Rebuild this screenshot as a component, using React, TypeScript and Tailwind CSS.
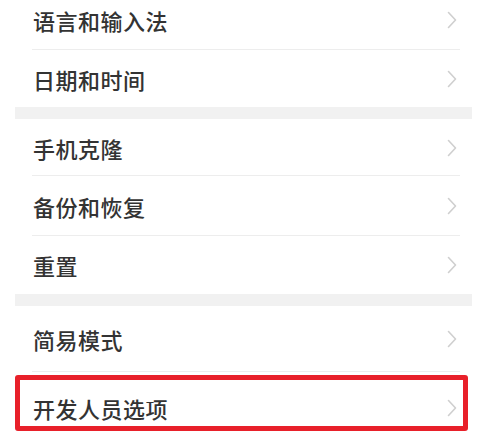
const sections = [
  [
    { label: "语言和输入法", h: "h-[60px]" },
    { label: "日期和时间", h: "h-[57px]" },
  ],
  [
    { label: "手机克隆", h: "h-[57px]" },
    { label: "备份和恢复", h: "h-[60px]" },
    { label: "重置", h: "h-[58px]" },
  ],
  [
    { label: "简易模式", h: "h-[66px]" },
    { label: "开发人员选项", h: "h-[72px]", marked: true },
  ],
];

const Chevron = () => (
  <svg width="10" height="18" viewBox="0 0 10 18" fill="none" className="shrink-0">
    <path d="M1.5 1.5 L8.5 9 L1.5 16.5" stroke="#cfcfcf" strokeWidth="1.6" strokeLinecap="round" strokeLinejoin="round" />
  </svg>
);

const Row = ({ label, h, marked, last }: { label: string; h: string; marked?: boolean; last: boolean }) => (
  <div className={`relative ${h} flex items-center justify-between pl-[18px] pr-[15px]`}>
    <span className="text-[22px] leading-none text-[#333] font-medium tracking-[0.5px]">{label}</span>
    <Chevron />
    {!last && <div className="absolute bottom-0 left-[17px] right-[12px] h-px bg-[#ededed]" />}
    {marked && (
      <div className="absolute left-0 right-[4px] top-[3px] h-[56px] border-[5px] border-[#e8202a] rounded-[3px]" />
    )}
  </div>
);

const App = () => {
  return (
    <div
      className="w-[489px] h-[436px] overflow-hidden bg-white"
      style={{ fontFamily: '"Noto Sans CJK SC", "Noto Sans", sans-serif' }}
    >
      <div className="-mt-[10px] ml-[15px] w-[457px] flex flex-col">
        {sections.map((rows, si) => (
          <div key={si} className="flex flex-col">
            {si > 0 && <div className="h-[12px] bg-[#f1f1f1]" />}
            {rows.map((r, ri) => (
              <Row key={r.label} label={r.label} h={r.h} marked={r.marked} last={ri === rows.length - 1} />
            ))}
          </div>
        ))}
      </div>
    </div>
  );
};

export default App;
